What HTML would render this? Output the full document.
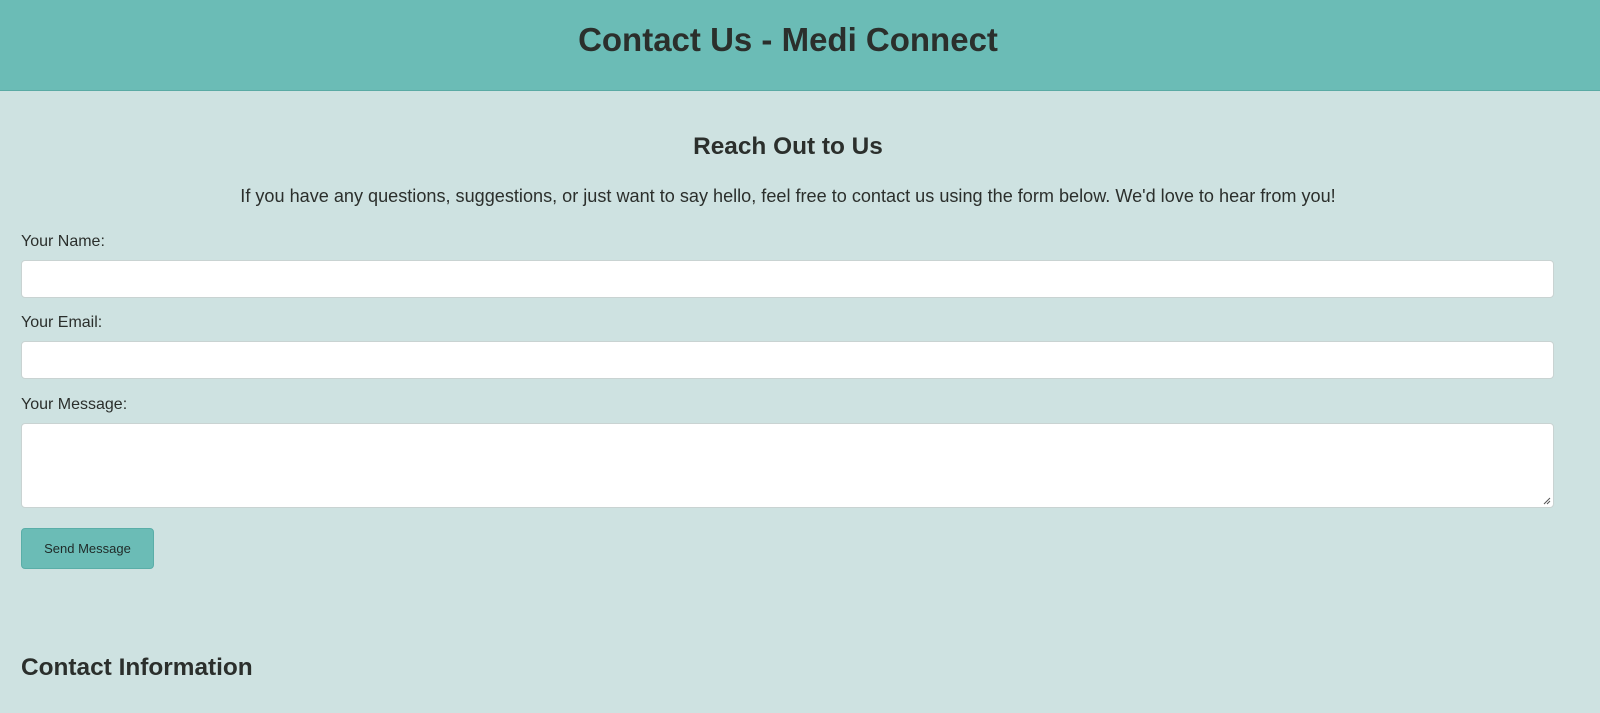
<!DOCTYPE html>
<html><head><style>
*{box-sizing:border-box;margin:0;padding:0}
body{width:1600px;height:713px;overflow:hidden;background:#cee2e1;font-family:"Liberation Sans",Arial,sans-serif;color:#2b2f2c;position:relative}
.hdr{position:absolute;left:0;top:0;width:1600px;height:91px;background:#6bbcb6;border-bottom:1px solid #5aaaa4}
.abs{position:absolute;white-space:nowrap}
h1{font-size:33px;font-weight:bold}
h2{font-size:24.4px;font-weight:bold}
.lbl{font-size:16px;left:21px}
.in{position:absolute;left:21px;width:1533px;background:#fff;border:1px solid #c9d3d2;border-radius:4px}
.btn{position:absolute;left:21px;top:528px;width:133px;height:41px;background:#6bbcb6;border:1px solid #5aaea8;border-radius:4px;font-size:13px;text-align:center;line-height:39px;color:#1f2a28}
</style></head><body>
<div class="hdr"></div>
<h1 class="abs" style="left:0;width:1576px;text-align:center;top:21px">Contact Us - Medi Connect</h1>
<h2 class="abs" style="left:0;width:1576px;text-align:center;top:133px">Reach Out to Us</h2>
<div class="abs" style="left:0;width:1576px;text-align:center;top:186px;font-size:18.1px">If you have any questions, suggestions, or just want to say hello, feel free to contact us using the form below. We'd love to hear from you!</div>
<div class="abs lbl" style="top:233px">Your Name:</div>
<div class="in" style="top:260px;height:38px"></div>
<div class="abs lbl" style="top:314px">Your Email:</div>
<div class="in" style="top:341px;height:38px"></div>
<div class="abs lbl" style="top:396px">Your Message:</div>
<div class="in" style="top:423px;height:85px"><svg style="position:absolute;right:2px;bottom:2px" width="8" height="8"><path d="M1 7L7 1M4 7L7 4" stroke="#555" stroke-width="1"/></svg></div>
<div class="btn">Send Message</div>
<h2 class="abs" style="left:21px;top:654px">Contact Information</h2>
</body></html>
